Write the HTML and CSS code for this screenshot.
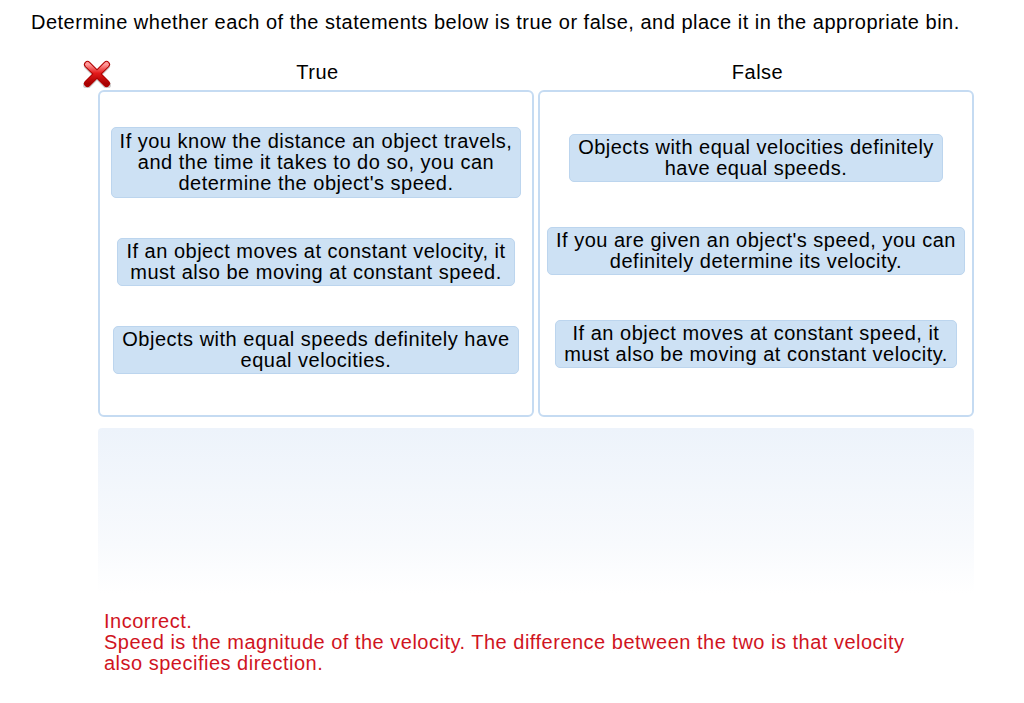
FILE: index.html
```html
<!DOCTYPE html>
<html>
<head>
<meta charset="utf-8">
<link rel="stylesheet" href="styles.css">
</head>
<body>
<p class="prompt">Determine whether each of the statements below is true or false, and place it in the appropriate bin.</p>
<div class="board">
  <svg class="mark" width="28" height="28" viewBox="0 0 28 28">
    <defs>
      <linearGradient id="xg" x1="0" y1="0" x2="0" y2="1">
        <stop offset="0" stop-color="#ff9a9a"/>
        <stop offset="0.45" stop-color="#e51b1b"/>
        <stop offset="1" stop-color="#a80000"/>
      </linearGradient>
    </defs>
    <g transform="translate(14 14)">
      <g stroke="#9a9a9a" stroke-width="8" stroke-linecap="round" opacity="0.45">
        <line x1="-9" y1="-8" x2="10" y2="11"/>
        <line x1="9" y1="-8" x2="-10" y2="11"/>
      </g>
      <g stroke="#b00000" stroke-width="7" stroke-linecap="round">
        <line x1="-9.5" y1="-9.5" x2="9.5" y2="9.5"/>
        <line x1="9.5" y1="-9.5" x2="-9.5" y2="9.5"/>
      </g>
      <g stroke="url(#xg)" stroke-width="5" stroke-linecap="round">
        <line x1="-9.5" y1="-9.5" x2="9.5" y2="9.5"/>
        <line x1="9.5" y1="-9.5" x2="-9.5" y2="9.5"/>
      </g>
    </g>
  </svg>
  <div class="titles">
    <div class="title">True</div>
    <div class="title">False</div>
  </div>
  <div class="bins">
    <div class="bin bin-left">
      <div class="card">If you know the distance an object travels,<br>and the time it takes to do so, you can<br>determine the object's speed.</div>
      <div class="card">If an object moves at constant velocity, it<br>must also be moving at constant speed.</div>
      <div class="card">Objects with equal speeds definitely have<br>equal velocities.</div>
    </div>
    <div class="bin bin-right">
      <div class="card">Objects with equal velocities definitely<br>have equal speeds.</div>
      <div class="card">If you are given an object's speed, you can<br>definitely determine its velocity.</div>
      <div class="card">If an object moves at constant speed, it<br>must also be moving at constant velocity.</div>
    </div>
  </div>
  <div class="tray"></div>
</div>
<div class="feedback">
  <div>Incorrect.</div>
  <div>Speed is the magnitude of the velocity. The difference between the two is that velocity<br>also specifies direction.</div>
</div>
</body>
</html>
```
FILE: styles.css
```css
html, body {
  margin: 0;
  padding: 0;
  background: #fff;
}
body {
  font-family: "Liberation Sans", Arial, sans-serif;
  font-size: 20px;
  letter-spacing: 0.5px;
  color: #000;
  width: 1024px;
}
.prompt {
  margin: 0;
  padding: 11px 0 0 31px;
  line-height: 22px;
}
.board {
  position: relative;
  margin: 28px 0 0 98px;
  width: 876px;
}
.mark {
  position: absolute;
  left: -15px;
  top: -1px;
}
.titles {
  display: grid;
  grid-template-columns: 1fr 1fr;
  column-gap: 4px;
  line-height: 22px;
}
.title {
  text-align: center;
  padding-left: 3px;
}
.bins {
  display: grid;
  grid-template-columns: 1fr 1fr;
  column-gap: 4px;
  margin-top: 7px;
}
.bin {
  box-sizing: border-box;
  height: 327px;
  border: 2px solid #c5dbf2;
  border-radius: 6px;
  display: flex;
  flex-direction: column;
  align-items: center;
}
.bin-left {
  padding-top: 35px;
  gap: 40px;
}
.bin-right {
  padding-top: 42px;
  gap: 45px;
}
.card {
  background: #cde1f4;
  border: 1px solid #bcd5ee;
  border-radius: 5px;
  padding: 2px 8px;
  line-height: 21px;
  text-align: center;
  white-space: nowrap;
}
.bin-left .card:first-child {
  padding: 3px 8px;
}
.tray {
  margin-top: 11px;
  height: 166px;
  border-radius: 4px;
  background: linear-gradient(#edf3fb 0%, #f8fafd 70%, #ffffff 100%);
}
.feedback {
  margin: 17px 0 0 104px;
  line-height: 21px;
  color: #d0141e;
}
```
